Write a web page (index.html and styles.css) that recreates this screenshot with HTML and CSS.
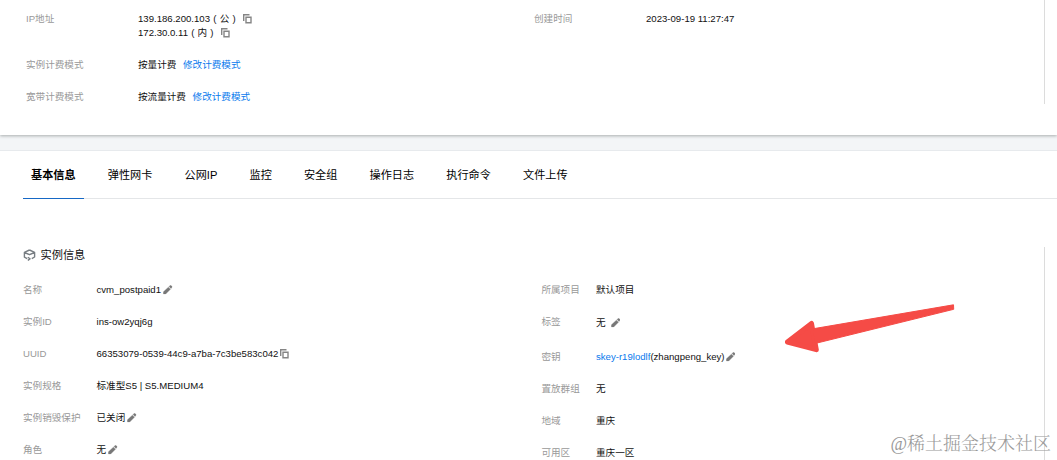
FILE: index.html
```html
<!DOCTYPE html>
<html lang="zh-CN">
<head>
<meta charset="utf-8">
<title>实例信息</title>
<link rel="stylesheet" href="styles.css">
</head>
<body>
<svg class="defs" width="0" height="0">
  <symbol id="copy" viewBox="0 0 9 10">
    <path d="M.7 7V.8H6.5M3 3.2H8V8.8H3Z" fill="none" stroke="#858585" stroke-width="1.4"/>
  </symbol>
  <symbol id="pencil" viewBox="0 0 10 10">
    <path d="M.5 9.5V7.2L5.7 2.3 7.8 4.4 2.8 9.5ZM6.4 1.6 7.5.6Q8 .2 8.5.6L9.3 1.4Q9.8 1.9 9.3 2.5L8.4 3.6Z" fill="#777" stroke="#777" stroke-width=".4"/>
  </symbol>
</svg>
<div class="page">
  <section class="summary">
    <dl class="list">
      <div class="row tall"><dt>IP地址</dt><dd><div>139.186.200.103<span class="paren">(</span>公<span class="paren">)</span><svg class="copy gap-copy"><use href="#copy"/></svg></div><div>172.30.0.11<span class="paren">(</span>内<span class="paren">)</span><svg class="copy gap-copy"><use href="#copy"/></svg></div></dd></div>
      <div class="row"><dt>实例计费模式</dt><dd>按量计费<a class="change">修改计费模式</a></dd></div>
      <div class="row"><dt>宽带计费模式</dt><dd>按流量计费<a class="change">修改计费模式</a></dd></div>
    </dl>
    <dl class="list second">
      <div class="row tall"><dt>创建时间</dt><dd>2023-09-19 11:27:47</dd></div>
    </dl>
  </section>
  <section class="detail">
    <nav class="tabs">
      <a class="tab active">基本信息</a><a class="tab">弹性网卡</a><a class="tab">公网IP</a><a class="tab">监控</a><a class="tab">安全组</a><a class="tab">操作日志</a><a class="tab">执行命令</a><a class="tab">文件上传</a>
    </nav>
    <div class="panel">
      <h3 class="title"><svg class="cube" viewBox="0 0 13 12"><path d="M6.5 1 11.6 3.4V8L8.8 9.6M6.5 1 1.4 3.4V8.2L4.2 9.6M1.4 3.5 6.5 5.7 11.6 3.5M4.8 8.2 7 9.8 4.8 11.3" fill="none" stroke="#777d82" stroke-width="1.4" stroke-linejoin="round"/></svg>实例信息</h3>
      <div class="columns">
        <dl class="list left">
          <div class="row"><dt>名称</dt><dd>cvm_postpaid1<svg class="pencil"><use href="#pencil"/></svg></dd></div>
          <div class="row"><dt>实例ID</dt><dd>ins-ow2yqj6g</dd></div>
          <div class="row"><dt>UUID</dt><dd>66353079-0539-44c9-a7ba-7c3be583c042<svg class="copy"><use href="#copy"/></svg></dd></div>
          <div class="row"><dt>实例规格</dt><dd>标准型S5 | S5.MEDIUM4</dd></div>
          <div class="row"><dt>实例销毁保护</dt><dd>已关闭<svg class="pencil"><use href="#pencil"/></svg></dd></div>
          <div class="row"><dt>角色</dt><dd>无<svg class="pencil"><use href="#pencil"/></svg></dd></div>
        </dl>
        <dl class="list right">
          <div class="row"><dt>所属项目</dt><dd>默认项目</dd></div>
          <div class="row tag"><dt>标签</dt><dd>无<svg class="pencil gap-pencil"><use href="#pencil"/></svg></dd></div>
          <div class="row"><dt>密钥</dt><dd><a class="link">skey-r19lodlf</a>(zhangpeng_key)<svg class="pencil key"><use href="#pencil"/></svg></dd></div>
          <div class="row"><dt>置放群组</dt><dd>无</dd></div>
          <div class="row"><dt>地域</dt><dd>重庆</dd></div>
          <div class="row"><dt>可用区</dt><dd>重庆一区</dd></div>
        </dl>
      </div>
    </div>
  </section>
  <svg class="arrow" viewBox="0 0 172 50"><path d="M2.4 39 26.5 20.5 31.3 46.7Z" fill="#f54b46" stroke="#f54b46" stroke-width="5" stroke-linejoin="round"/><path d="M28 25.8 168.5 1.8 168.7 6.3 30 40.5Z" fill="#f54b46" stroke="#f54b46" stroke-linejoin="round"/></svg>
  <div class="watermark">@稀土掘金技术社区</div>
</div>
</body>
</html>
```

FILE: styles.css
```css
* { box-sizing: border-box; }
body { margin: 0; background: #f3f5f7; font-family: "Liberation Sans", "Noto Sans CJK SC", sans-serif; font-size: 9.6px; color: #111; }
dl, dd, h3 { margin: 0; }
.defs { position: absolute; }
.page { position: relative; height: 460px; overflow: hidden; }
.summary { display: flex; height: 135px; padding-left: 26px; background: linear-gradient(#dcdcdc, #dcdcdc) 1044px 0 / 1px 104px no-repeat #fff; box-shadow: 0 1px 3px #a8adad; }
.list { display: flex; flex-direction: column; width: 508px; padding-top: 3px; }
.row { display: flex; height: 32px; line-height: 14px; padding-top: 9px; white-space: nowrap; }
.row.tall { height: 46px; }
.summary dt { width: 112px; }
dt { flex: none; color: #999; }
dd div { height: 14px; }
.paren { display: inline-block; width: 9.6px; text-align: center; }
.copy { width: 9px; height: 10px; vertical-align: -2px; margin-left: 1.4px; }
.gap-copy { margin-left: 4.6px; }
.pencil { width: 9.5px; height: 9.5px; vertical-align: -1.5px; margin-left: 2px; }
.gap-pencil { margin-left: 5px; }
.pencil.key { margin-left: 1px; }
.change { color: #0a7aed; margin-left: 6.6px; }
.link { color: #0a7aed; }
.detail { height: 309px; margin-top: 16px; background: #fff; box-shadow: 0 -1px 0 #e7eaed; }
.tabs { display: flex; gap: 16.2px; height: 48px; margin-left: 23px; border-bottom: 1px solid #e4e6e8; }
.tab { height: 48px; padding: 0 8px; line-height: 48px; font-size: 11.15px; color: #000; }
.tab.active { font-weight: bold; border-bottom: 1px solid #1668c5; }
.panel { height: 213px; margin-top: 48px; padding-left: 23px; background: linear-gradient(#dcdcdc, #dcdcdc) 1044px 0 / 1px 100% no-repeat; }
.title { display: flex; align-items: center; gap: 4.5px; height: 16px; line-height: 15px; font-size: 11.2px; font-weight: normal; }
.cube { width: 13px; height: 12px; }
.columns { display: flex; padding-top: 8px; }
.left { width: 518.4px; }
.left dt { width: 73.5px; }
.right dt { width: 54.6px; }
.row.tag { height: 35px; }
.tag dd { padding-top: 1px; }
.summary .second { padding-left: 0; }
.arrow { position: absolute; left: 785px; top: 303px; width: 172px; height: 50px; }
.watermark { position: absolute; left: 890.5px; top: 431px; line-height: 26px; font-family: "Liberation Serif", "Noto Serif CJK SC", "Noto Sans CJK SC", serif; font-weight: 300; font-size: 18px; color: #999; white-space: nowrap; }
```
